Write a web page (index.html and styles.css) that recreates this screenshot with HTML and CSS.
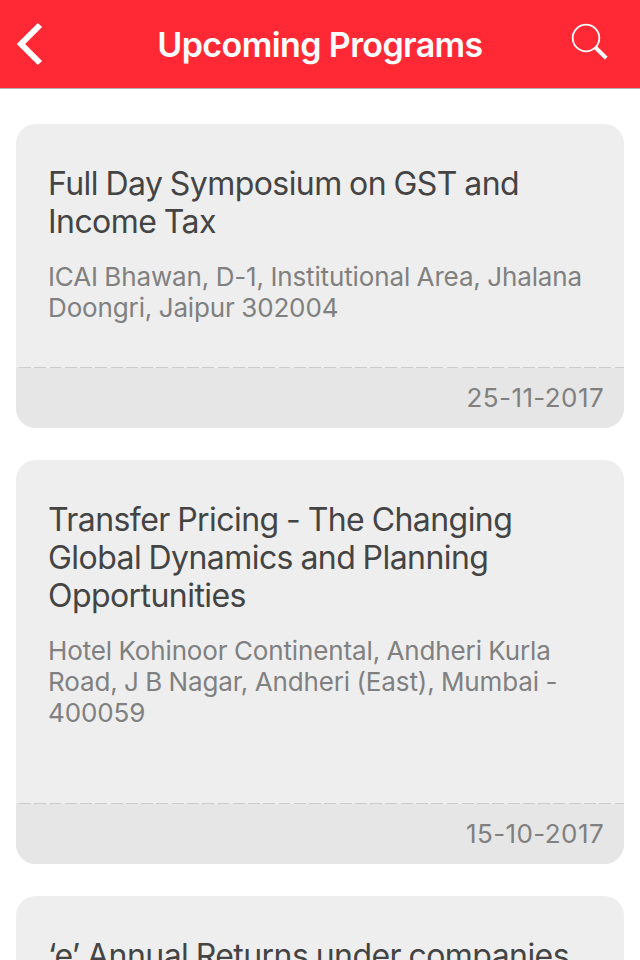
FILE: index.html
```html
<!DOCTYPE html>
<html lang="en">
<head>
    <meta charset="UTF-8">
    <meta name="viewport" content="width=device-width, initial-scale=1.0">
    <title>Upcoming Programs</title>
    <link rel="stylesheet" href="styles.css">
</head>
<body>
    <header class="navbar">
        <svg class="back-icon" viewBox="0 0 28 44" fill="none" stroke="#fff" stroke-width="6">
            <path d="M24 3 L5 22 L24 41"/>
        </svg>
        <h1>Upcoming Programs</h1>
        <svg class="search-icon" viewBox="0 0 38 38" fill="none" stroke="#fff">
            <circle cx="15" cy="15" r="13.3" stroke-width="1.8"/>
            <path d="M24.5 24.5 L35.2 35.2" stroke-width="4"/>
        </svg>
    </header>

    <main class="program-list">
        <article class="card">
            <div class="card-body">
                <h2>Full Day Symposium on GST and<br>Income Tax</h2>
                <p>ICAI Bhawan, D-1, Institutional Area, Jhalana<br>Doongri, Jaipur 302004</p>
            </div>
            <div class="card-footer">25-11-2017</div>
        </article>

        <article class="card">
            <div class="card-body tall">
                <h2>Transfer Pricing - The Changing<br>Global Dynamics and Planning<br>Opportunities</h2>
                <p>Hotel Kohinoor Continental, Andheri Kurla<br>Road, J B Nagar, Andheri (East), Mumbai -<br>400059</p>
            </div>
            <div class="card-footer">15-10-2017</div>
        </article>

        <article class="card">
            <div class="card-body">
                <h2>‘e’ Annual Returns under companies</h2>
            </div>
        </article>
    </main>
</body>
</html>
```
FILE: styles.css
```css
* {
    box-sizing: border-box;
}

body {
    margin: 0;
    height: 960px;
    overflow: hidden;
    display: flex;
    flex-direction: column;
    background-color: #fff;
    font-family: Inter, "Liberation Sans", sans-serif;
}

h1, h2, p {
    margin: 0;
    font-weight: 400;
    white-space: nowrap;
}

.navbar {
    flex: none;
    display: flex;
    align-items: center;
    justify-content: space-between;
    height: 89px;
    padding: 0 31px 0 16px;
    background-color: #ff2936;
    border-bottom: 1px solid #b2b2b2;
}

.navbar h1 {
    color: #fff;
    font-size: 34px;
    font-weight: 600;
    line-height: 40px;
    letter-spacing: -0.6px;
    margin: 1px 0 0 25px;
}

.back-icon {
    width: 28px;
    height: 44px;
}

.search-icon {
    width: 38px;
    height: 38px;
    margin-bottom: 4px;
}

.program-list {
    flex: 1;
    min-height: 0;
    overflow: hidden;
    display: flex;
    flex-direction: column;
    gap: 32px;
    padding: 35px 16px 0;
}

.card {
    flex: none;
    border-radius: 20px;
    background-color: #eee;
    overflow: hidden;
}

.card-body {
    padding: 41px 32px 45px;
}

.card-body.tall {
    padding-bottom: 76px;
}

.card h2 {
    color: #444;
    font-size: 32px;
    line-height: 38px;
    letter-spacing: -0.56px;
    word-spacing: -1px;
}

.card p {
    margin-top: 20px;
    color: #808080;
    font-size: 26px;
    line-height: 31px;
    letter-spacing: -0.13px;
    word-spacing: -0.7px;
}

.card-footer {
    height: 61px;
    margin-top: -1px;
    padding: 0 20px 0 0;
    background: repeating-linear-gradient(to right, #ccc 0, #ccc 11.9px, #eee 11.9px, #eee 15.27px) 3px 0 / 100% 1px no-repeat, #e6e6e6;
    color: #808080;
    font-size: 26px;
    line-height: 62px;
    letter-spacing: 0.4px;
    text-align: right;
}
```
